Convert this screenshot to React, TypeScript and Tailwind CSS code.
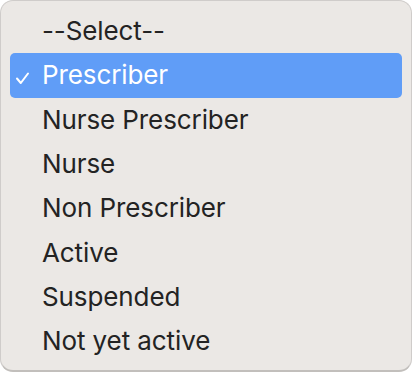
import React from 'react';

const options = [
  '--Select--',
  'Prescriber',
  'Nurse Prescriber',
  'Nurse',
  'Non Prescriber',
  'Active',
  'Suspended',
  'Not yet active',
];

export default function App() {
  const selected = 1;
  return (
    <div className="w-[412px] h-[374px] bg-white">
      <div
        className="w-[412px] h-[372px] bg-[#ebe8e5] border border-[#cfccca] border-b-[2px] border-b-[#c2bfbc] rounded-[13px] px-[9px] pt-[8px] pb-[8px] flex flex-col"
        style={{ fontFamily: 'Inter, "Noto Sans", sans-serif' }}
      >
        {options.map((opt, idx) => {
          const active = idx === selected;
          return (
            <div
              key={idx}
              className={`h-[44.3px] shrink-0 flex items-center rounded-[5px] relative ${
                active ? 'bg-[#609df7] text-white' : 'text-[#232323]'
              }`}
            >
              {active && (
                <svg
                  className="absolute left-[5px] top-[19px]"
                  width="15"
                  height="13"
                  viewBox="0 0 15 13"
                  fill="none"
                >
                  <path d="M2 6.5 L5.8 11 L13 1.5" stroke="white" strokeWidth="2" strokeLinecap="round" strokeLinejoin="round" />
                </svg>
              )}
              <span className="pl-[32px] text-[26px] leading-none tracking-[-0.1px]">{opt}</span>
            </div>
          );
        })}
      </div>
    </div>
  );
}
